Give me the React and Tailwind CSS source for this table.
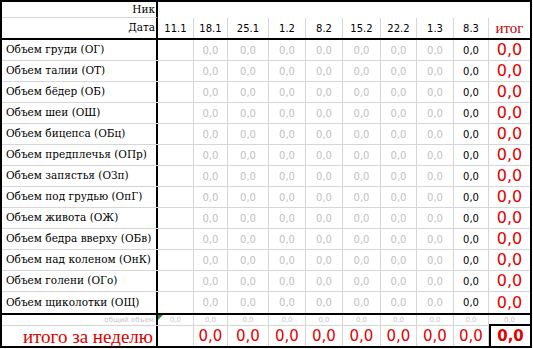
import React from "react";

const labels = [
  "Объем груди (ОГ)",
  "Объем талии (ОТ)",
  "Объем бёдер (ОБ)",
  "Объем шеи (ОШ)",
  "Объем бицепса (ОБц)",
  "Объем предплечья (ОПр)",
  "Объем запястья (ОЗп)",
  "Объем под грудью (ОпГ)",
  "Объем живота (ОЖ)",
  "Объем бедра вверху (ОБв)",
  "Объем над коленом (ОнК)",
  "Объем голени (ОГо)",
  "Объем щиколотки (ОЩ)",
];

const dates = ["11.1", "18.1", "25.1", "1.2", "8.2", "15.2", "22.2", "1.3", "8.3"];
const widths = ["w-[36px]", "w-[34px]", "w-[41px]", "w-[37px]", "w-[37px]", "w-[38px]", "w-[36px]", "w-[37px]", "w-[35px]"];

const sans = "font-['DejaVu_Sans',sans-serif]";
const serif = "font-['DejaVu_Serif',serif]";
const tserif = "font-['Liberation_Serif',serif]";

function Cell({ w, children, className = "" }) {
  return (
    <div className={`${w} h-full shrink-0 border-r border-[#d6d6d6] flex items-center justify-center ${className}`}>
      {children}
    </div>
  );
}

export default function App() {
  return (
    <div className="bg-white w-[533px] h-[349px]">
      <div className="w-[532px] border-2 border-black flex flex-col">
        {/* Ник row */}
        <div className="flex h-[16px]">
          <div className={`w-[156px] h-full shrink-0 border-r-2 border-r-black border-b border-b-[#d6d6d6] flex items-center justify-end pr-[1px] text-[10.5px] text-black ${serif}`}>
            Ник
          </div>
          <div className="flex-1" />
        </div>
        {/* Дата row */}
        <div className="flex h-[22px] border-b-2 border-black">
          <div className={`w-[156px] h-full shrink-0 border-r-2 border-black flex items-center justify-end pr-[1px] text-[10.5px] text-black ${serif}`}>
            Дата
          </div>
          {dates.map((d, i) => (
            <Cell key={d} w={widths[i]} className={`text-[10px] text-black ${sans}`}>
              {d}
            </Cell>
          ))}
          <div className={`w-[41px] h-full shrink-0 flex items-center justify-center text-[15px] text-[#c00000] ${tserif}`}>
            итог
          </div>
        </div>
        {/* data rows */}
        {labels.map((l, r) => {
          const last = r === labels.length - 1;
          return (
            <div
              key={l}
              className={last ? "flex h-[23px] border-b-2 border-black" : "flex h-[21px] border-b border-[#d6d6d6]"}
            >
              <div className={`w-[156px] h-full shrink-0 border-r-2 border-black flex items-center pl-[4px] text-[10.5px] text-black whitespace-nowrap ${serif}`}>
                {l}
              </div>
              {dates.map((d, i) => (
                <Cell
                  key={d}
                  w={widths[i]}
                  className={`text-[10px] ${sans} ${i === 8 ? "text-black" : "text-[#bfbfbf]"}`}
                >
                  {i === 0 ? "" : "0,0"}
                </Cell>
              ))}
              <div className={`w-[41px] h-full shrink-0 flex items-center justify-center text-[16px] text-[#e00000] ${sans}`}>
                0,0
              </div>
            </div>
          );
        })}
        {/* общий объем row */}
        <div className="flex h-[11px] border-b border-[#d6d6d6]">
          <div className={`w-[156px] h-full shrink-0 border-r-2 border-black flex items-center justify-end pr-[2px] text-[7px] text-[#c8c8c8] leading-none ${sans}`}>
            общий объем
          </div>
          {dates.map((d, i) => (
            <Cell key={d} w={widths[i]} className={`relative text-[7px] leading-none text-[#c8c8c8] ${sans}`}>
              {i === 0 && (
                <span className="absolute top-0 left-0 w-0 h-0 border-t-[5px] border-t-[#1f8a2e] border-r-[5px] border-r-transparent" />
              )}
              0,0
            </Cell>
          ))}
          <div className={`w-[41px] h-full shrink-0 flex items-center justify-center text-[7px] leading-none text-[#c8c8c8] ${sans}`}>
            0,0
          </div>
        </div>
        {/* итого row */}
        <div className="flex h-[20px]">
          <div className={`w-[156px] h-full shrink-0 border-r-2 border-black flex items-center justify-end pr-[3px] text-[19px] text-[#e00000] leading-none whitespace-nowrap ${tserif}`}>
            итого за неделю
          </div>
          {dates.map((d, i) => (
            <Cell key={d} w={widths[i]} className={`text-[15px] leading-none text-[#e00000] ${sans}`}>
              {i === 0 ? "" : "0,0"}
            </Cell>
          ))}
          <div className={`w-[41px] h-[22px] -mt-[2px] shrink-0 border-l-2 border-t-2 border-black flex items-center justify-center text-[15px] font-bold leading-none text-[#e00000] ${sans}`}>
            0,0
          </div>
        </div>
      </div>
    </div>
  );
}
